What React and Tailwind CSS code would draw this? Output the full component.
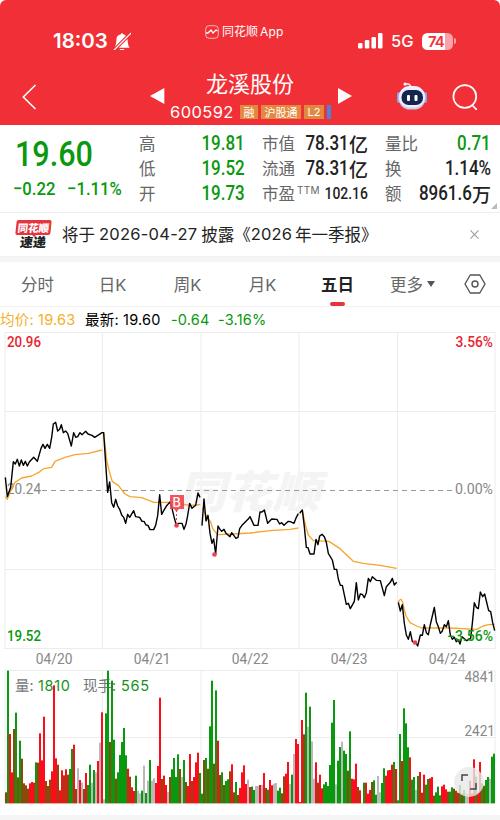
import { AiOutlineClose } from "react-icons/ai";
import { BsFillBellSlashFill } from "react-icons/bs";

const BAR_COLORS = { g: "#0a980f", r: "#fb0d1b", b: "#8b4a0c", x: "#b9b9b9" };

// colour key + top of the bar, one entry every 2px, 49 per day
const VOLUME = [
  "b457 g92 r282 r397 b267 g218 b412 g302 b356 b430 b436 b446 r430 r426 r428 g367 b368 r280 r361 r230 b423 b438 b419 r394 r136 r355 b374 r451 r391 b406 r388 b404 g387 g327 r314 b447 x385 r420 x428 b447 r399 g435 g374 x428 g390 x397 r363 x308 r217",
  "x478 g220 g92 b306 g122 g299 b416 g397 g345 g306 g264 g346 r386 b410 r442 r453 g407 x452 x460 g452 x377 g459 x422 g360 x422 x415 r429 r378 r173 b417 r407 r435 x456 b411 g388 g354 g411 g343 b387 x411 g360 b426 r438 r342 b423 r411 r367 r338 g399",
  "g461 b360 g354 b386 g259 g122 b371 g151 r302 b405 g397 b435 g423 g418 b394 r373 b457 g426 b465 r444 r397 r376 r432 x419 r441 g440 g450 x438 x438 r435 x435 r399 b444 g449 r420 r436 x431 x429 g452 g443 b460 b409 r401 r366 x432 g404 x342 r297 r312",
  "r486 r240 b283 g158 x260 g200 x304 x416 r367 b428 r404 r445 g433 g426 g438 g375 g248 g180 x433 g362 g321 x305 g332 g342 b392 g274 r416 r418 r371 b441 r451 x488 g428 r428 r461 r450 b426 g421 g464 x408 x457 g429 g385 r407 r391 r390 r374 g366 r387",
  "g481 g282 r363 g205 g250 g322 r352 g419 g411 x449 g408 r396 b458 r404 g434 g417 r415 r411 b467 g457 g440 g466 r439 r434 r448 b455 g455 g442 b446 b452 r458 g435 b461 g450 x458 x462 r422 r460 r358 g410 r458 r366 g430 b437 g420 g411 x416 g350 g341",
]
  .join(" ")
  .split(" ")
  .map((item) => ({ color: BAR_COLORS[item[0]], top: Number(item.slice(1)) }));

const PRICE = [
  "16,232 22,290 32,262 40,185 46,192 52,178 58,198 64,180 70,196 76,184 82,198 88,186 101,172 112,184 123,145 129,133 135,145 142,133 149,145 155,112 160,72 167,67 173,93 179,88 184,74 190,98 197,93 203,100 214,138 221,98 227,112 233,110 240,98 246,104 257,94 264,102 276,106 284,112 297,104 306,98 311,98 317,190 323,277 329,246 335,308 341,322 347,298 353,318 359,328 365,345 371,352 377,370 383,343 389,352 401,332 407,350 419,352 426,364 432,364 438,375 444,376 450,389 461,389 467,376 473,347 479,284 485,343 491,332 500,317 510,306 516,325 522,350 529,376 536,370 546,370 552,388 558,372 563,347 569,310 576,325 587,316 594,279 600,292",
  "606,377 612,297 618,363 624,346 630,400 636,430 641,417 647,462 654,378 660,388 665,394 672,388 678,400 690,410 695,398 708,415 714,412 719,386 726,376 738,364 744,358 750,350 762,376 774,376 780,336 786,336 793,330 803,370 815,357 831,358 839,372 845,368 852,376 865,364 871,365 882,370 889,352 895,341",
  "899,340 907,330 913,380 919,442 924,443 930,462 942,462 948,418 954,434 959,408 966,403 973,410 979,427 985,460 997,480 1003,508 1010,508 1015,537 1021,556 1027,556 1039,613 1045,610 1051,626 1063,604 1069,548 1075,600 1081,582 1087,583 1093,593 1099,578 1105,535 1111,545 1117,530 1129,541 1141,542 1153,587 1159,560 1171,547 1177,535 1183,555 1190,547",
  "1195,607 1201,633 1207,614 1213,670 1219,705 1225,718 1231,695 1237,725 1247,727 1253,738 1261,705 1267,706 1273,674 1279,698 1285,704 1291,674 1297,648 1303,622 1309,665 1315,680 1321,700 1327,693 1333,674 1339,680 1345,662 1351,705 1357,718 1363,712 1369,725 1375,720 1380,732 1386,710 1400,722 1412,715 1417,670 1423,608 1429,622 1435,626 1441,576 1448,590 1454,582 1466,632 1472,635 1478,668 1484,692",
];

const AVERAGE = [
  "16,290 22,298 35,265 45,247 65,234 95,228 115,218 131,206 155,202 165,184 195,172 225,164 265,160 306,150",
  "311,98 320,180 328,215 337,245 355,256 375,282 390,290 425,293 462,307 510,307 540,312 570,316 601,314",
  "608,325 620,350 632,366 638,385 645,395 655,404 700,402 750,399 810,392 870,388 895,384",
  "899,337 907,332 915,370 925,405 940,422 987,424 1020,446 1060,484 1090,490 1140,496 1190,505",
  "1195,607 1199,600 1203,598 1208,606 1213,630 1218,648 1230,668 1250,678 1265,684 1350,684 1430,688 1450,678 1465,674 1484,673",
];

const DAYS = ["04/20", "04/21", "04/22", "04/23", "04/24"];
const DAY_LINES = [5, 102.5, 201, 299, 397.5, 495];

const GREEN = "text-[#0a980f]";

const quotes = [
  [
    { label: "高", value: "19.81", color: GREEN },
    { label: "低", value: "19.52", color: GREEN },
    { label: "开", value: "19.73", color: GREEN },
  ],
  [
    { label: "市值", value: "78.31", unit: "亿" },
    { label: "流通", value: "78.31", unit: "亿" },
    { label: "市盈", sup: "TTM", value: "102.16", small: true },
  ],
  [
    { label: "量比", value: "0.71", color: GREEN },
    { label: "换", value: "1.14%" },
    { label: "额", value: "8961.6", unit: "万" },
  ],
];

function Robot() {
  return (
    <svg width="32" height="30" viewBox="0 0 32 30">
      <path d="M9 3.5q4-2 6 2" fill="none" stroke="#f3d9ea" strokeWidth="1.6" strokeLinecap="round" />
      <circle cx="9" cy="3" r="1.5" fill="#fff" />
      <rect x="1" y="11" width="5" height="11" rx="2.5" fill="#8fa3ec" />
      <rect x="26" y="11" width="5" height="11" rx="2.5" fill="#8fa3ec" />
      <rect x="2.5" y="5.5" width="27" height="23" rx="11.5" fill="#c9cdf8" />
      <rect x="3" y="5" width="26" height="21.5" rx="10.7" fill="#f1efff" />
      <rect x="5.5" y="9" width="21.5" height="15" rx="7" fill="#14264d" />
      <rect x="11" y="14" width="3" height="6" rx="1" fill="#fff" />
      <rect x="18.5" y="14" width="3" height="6" rx="1" fill="#fff" />
    </svg>
  );
}

function Header() {
  return (
    <header className="h-[125px] rounded-t-[6px] bg-[#f03036] text-white">
      <div className="flex h-[72px] items-start pl-[53px]">
        <span className="mt-[28px] w-[58px] font-[Inter] text-[20.5px] leading-[26px] font-semibold">
          18:03
        </span>
        <BsFillBellSlashFill className="mt-[32px] ml-[2px] h-[18px] w-[18px]" />
        <div className="mt-[22px] ml-[74px] flex w-[139px] items-center gap-[3px]">
          <svg width="14" height="14" viewBox="0 0 14 14" fill="none" stroke="#fff">
            <rect x=".7" y=".7" width="12.6" height="12.6" rx="3.5" strokeWidth=".8" opacity=".8" />
            <path d="M1 8h2l3-3 2 3 3-3 1.5 1" strokeWidth="1.3" />
          </svg>
          <span className="text-[12px] leading-[18px] whitespace-nowrap">
            同花顺<span className="ml-[2px] font-[Inter] tracking-[0.2px]">App</span>
          </span>
        </div>
        <div className="mt-[32px] ml-[14px] flex items-center">
          <svg width="25" height="16" viewBox="0 0 25 16" fill="#fff">
            <rect x="0" y="10" width="4.5" height="5.5" rx="1.2" />
            <rect x="6.8" y="7" width="4.5" height="8.5" rx="1.2" />
            <rect x="13.5" y="4" width="4.5" height="11.5" rx="1.2" />
            <rect x="20" y="0" width="4.5" height="15.5" rx="1.2" />
          </svg>
          <span className="ml-[8px] w-[23px] font-[Inter] text-[16.5px] leading-[18px] font-medium">
            5G
          </span>
          <div className="ml-[8px] flex h-[17px] w-[31px] items-center rounded-[5.5px] bg-linear-to-r from-white from-75% to-[#f9a3a8] to-75% pl-[6px] font-[Inter] text-[15px] leading-none font-semibold tracking-[-0.9px] text-[#f03036]">
            74
          </div>
          <span className="ml-[1px] h-[6px] w-[2px] rounded-r-full bg-[#f9a3a8]" />
        </div>
      </div>
      <div className="flex h-[53px] items-start">
        <svg className="mt-[12px] ml-[22px]" width="15" height="26" viewBox="0 0 15 26" fill="none" stroke="#fff" strokeWidth="1.6">
          <path d="M13.5 1 1.3 13l12.2 12" />
        </svg>
        <svg className="mt-[16px] ml-[113px]" width="15" height="16" viewBox="0 0 15 16" fill="#fff">
          <path d="M14.3 0v16L0 8z" />
        </svg>
        <div className="ml-[5px] w-[163px]">
          <div className="h-[22px] pl-[36px] text-[22px] leading-[20px] whitespace-nowrap">龙溪股份</div>
          <div className="mt-[10px] flex items-center gap-[3px]">
            <span className="w-[67px] font-[Inter] text-[16.5px] leading-[16px] tracking-[0.4px]">
              600592
            </span>
            <span className="h-[14px] w-[18px] bg-[#e3893f] text-center text-[11px] leading-[14px]">
              融
            </span>
            <span className="h-[14px] w-[40px] bg-[#e3893f] text-center text-[11px] leading-[14px]">
              沪股通
            </span>
            <span className="h-[14px] w-[20px] bg-[#e3893f] text-center font-[Inter] text-[11px] leading-[14px]">
              L2
            </span>
            <span className="h-[14px] w-[4px] bg-[#4b82db]" />
          </div>
        </div>
        <svg className="mt-[16px] ml-[5px]" width="15" height="16" viewBox="0 0 15 16" fill="#fff">
          <path d="M0 0v16l14-8z" />
        </svg>
        <div className="mt-[9px] ml-[43px]">
          <Robot />
        </div>
        <svg className="mt-[12px] ml-[24px]" width="27" height="26" viewBox="0 0 27 26" fill="none" stroke="#fff" strokeWidth="1.7">
          <circle cx="12.8" cy="12.5" r="11.4" />
          <path d="m20.5 21.5 3.8 3.8" strokeLinecap="round" />
        </svg>
      </div>
    </header>
  );
}

function QuoteRow({ item }) {
  return (
    <div className="flex h-[25px] items-center justify-between">
      <div className="flex items-start text-[16.5px] leading-[25px] text-[#666]">
        {item.label}
        {item.sup && (
          <span className="ml-[2px] font-[Inter] text-[10px] leading-[19px] tracking-[0.3px]">
            {item.sup}
          </span>
        )}
      </div>
      <div className={`flex items-center justify-end ${item.color ?? "text-[#222]"}`}>
        <span
          className={`w-0 font-[Roboto] leading-[25px] font-medium whitespace-nowrap ${
            item.small ? "text-[16px]" : "text-[19.5px]"
          }`}
        >
          <span className="float-right origin-right scale-x-[0.87]">{item.value}</span>
        </span>
        {item.unit && <span className="text-[19px] leading-[24px] font-medium">{item.unit}</span>}
      </div>
    </div>
  );
}

function Quotes() {
  return (
    <section className="relative flex h-[88px] border-b border-[#eee] pt-[6px]">
      <div className={`w-[139px] font-[Roboto] font-medium ${GREEN}`}>
        <div className="mt-[2px] ml-[15px] origin-left scale-x-[0.86] text-[35.5px] leading-[42px]">
          19.60
        </div>
        <div className="mt-[2px] ml-[13px] flex w-[140px] origin-left scale-x-[0.9] gap-[13px] text-[18.5px] leading-[24px] whitespace-nowrap">
          <span>−0.22</span>
          <span>−1.11%</span>
        </div>
      </div>
      <div className="flex gap-[17px]">
        {quotes.map((column, i) => (
          <div key={i} className="w-[106px]">
            {column.map((item) => (
              <QuoteRow key={item.label} item={item} />
            ))}
          </div>
        ))}
      </div>
      <svg className="absolute right-[3px] bottom-[3px]" width="6" height="6">
        <path d="M6 0v6H0z" fill="#bbb" />
      </svg>
    </section>
  );
}

function News() {
  return (
    <section className="flex h-[44px] items-center border-b border-[#f2f2f2]">
      <div className="ml-[15px] flex w-[37px] flex-col items-center">
        <span className="h-[15px] w-[35px] -skew-x-6 rounded-[2px] bg-[#e7353d] text-center text-[10.5px] leading-[15px] font-black text-white">
          同花顺
        </span>
        <span className="-mt-px border-x-[3px] border-t-[3px] border-x-transparent border-t-[#e7353d]" />
        <span className="-mt-[2px] -skew-x-6 text-[13px] leading-[14px] font-black text-[#222]">速递</span>
      </div>
      <div className="ml-[10px] flex w-[400px] items-center text-[16.5px] whitespace-nowrap text-[#222]">
        将于
        <span className="mx-[4px] font-[Inter] text-[16.5px] tracking-[0.25px]">2026-04-27</span>
        披露《
        <span className="mr-[3px] font-[Inter] text-[16.5px] tracking-[0.1px]">2026</span>
        年一季报》
      </div>
      <AiOutlineClose className="ml-[6px] h-[13px] w-[13px] text-[#999]" />
    </section>
  );
}

function Tabs() {
  return (
    <nav className="flex h-[45px] border-b border-[#f2f2f2] text-[16.5px] leading-[45px] text-[#666]">
      <span className="w-[75px] text-center">分时</span>
      <span className="w-[75px] text-center">
        日<span className="font-[Inter]">K</span>
      </span>
      <span className="w-[75px] text-center">
        周<span className="font-[Inter]">K</span>
      </span>
      <span className="w-[75px] text-center">
        月<span className="font-[Inter]">K</span>
      </span>
      <span className="flex w-[75px] flex-col items-center font-bold text-[#222]">
        <span className="h-[40px]">五日</span>
        <span className="h-[4px] w-[15px] shrink-0 rounded-full bg-[#e7353d]" />
      </span>
      <span className="flex w-[75px] items-center justify-center gap-[4px]">
        更多
        <svg width="8" height="6" viewBox="0 0 8 6" fill="#555">
          <path d="M0 0h8L4 6z" />
        </svg>
      </span>
      <span className="flex w-[50px] items-center justify-center">
        <svg width="22" height="20" viewBox="0 0 22 20" fill="none" stroke="#555" strokeWidth="1.4">
          <path d="M6.2 1h9.6L21 10l-5.2 9H6.2L1 10z" strokeLinejoin="round" />
          <circle cx="11" cy="10" r="3" />
        </svg>
      </span>
    </nav>
  );
}

function Legend() {
  return (
    <div className="flex h-[25px] items-center font-[Inter,'Noto_Sans_CJK_SC',sans-serif] text-[14.5px] tracking-[0.2px] whitespace-nowrap">
      <span className="w-[85px] text-[#f4b02a]">均价: 19.63</span>
      <span className="w-[86px] text-black">最新: 19.60</span>
      <span className={`w-[47px] ${GREEN}`}>-0.64</span>
      <span className={GREEN}>-3.16%</span>
    </div>
  );
}

function ChartText({ x, y, width, size = 14, fill, className = "font-[Roboto]", children }) {
  return (
    <text
      x={x}
      y={y}
      fill={fill}
      fontSize={size}
      textLength={width}
      lengthAdjust="spacingAndGlyphs"
      className={className}
    >
      {children}
    </text>
  );
}

function PriceChart() {
  return (
    <svg className="block" width="500" height="317" viewBox="0 332 500 317">
      <g stroke="#ececec">
        {DAY_LINES.map((x) => (
          <path key={x} d={`M${x} 332v317`} />
        ))}
        <path d="M5 332.5h490M5 411.5h490M5 569.5h490M5 648.5h490" />
      </g>
      <text
        x="178"
        y="508"
        fontSize="44"
        fill="#f4f4f4"
        textLength="142"
        lengthAdjust="spacingAndGlyphs"
        className="font-black italic"
      >
        同花顺
      </text>
      <path d="M42 490.5h414" stroke="#999" strokeDasharray="5 4" />
      <ChartText x="7" y="494" width="34" fill="#888">20.24</ChartText>
      <ChartText x="455" y="494" width="38" fill="#888">0.00%</ChartText>
      <g transform="translate(0 400) scale(.33333)" fill="none" strokeLinejoin="round">
        {AVERAGE.map((points) => (
          <polyline key={points} points={points} stroke="#f7a52c" strokeWidth="4" />
        ))}
        {PRICE.map((points) => (
          <polyline key={points} points={points} stroke="#000" strokeWidth="4.2" />
        ))}
      </g>
      <path d="M176.5 510v15" stroke="#ef4250" strokeDasharray="2 2" />
      <g fill="#ef4250">
        <path d="M170 495h14v14h-5l-2.5 3-2.5-3h-4z" opacity=".9" />
        <circle cx="176.5" cy="525.5" r="2.3" />
        <circle cx="214.5" cy="554.5" r="2.3" />
        <circle cx="415" cy="642.5" r="2.3" />
      </g>
      <text x="172.5" y="506.5" fontSize="12.5" fill="#fff" className="font-[Inter] font-medium">
        B
      </text>
      <ChartText x="7" y="346.5" width="34" fill="#e7242f" className="font-[Roboto] font-medium">
        20.96
      </ChartText>
      <ChartText x="455.5" y="346.5" width="37.5" fill="#e7242f" className="font-[Roboto] font-medium">
        3.56%
      </ChartText>
      <ChartText x="7" y="640.5" width="34" fill="#0a980f" className="font-[Roboto] font-medium">
        19.52
      </ChartText>
      <ChartText x="447" y="640.5" width="46" fill="#0a980f" className="font-[Roboto] font-medium">
        −3.56%
      </ChartText>
    </svg>
  );
}

function DateAxis() {
  return (
    <div className="flex h-[21px] pl-[5px] font-[Roboto] text-[14.5px] leading-[21px] text-[#888]">
      {DAYS.map((day) => (
        <span key={day} className="w-[98.2px] scale-x-[0.95] text-center">
          {day}
        </span>
      ))}
    </div>
  );
}

function VolumeChart() {
  return (
    <div className="relative h-[145px]">
      <svg className="block" width="500" height="134" viewBox="0 670 500 134">
        <g stroke="#ececec">
          {DAY_LINES.map((x) => (
            <path key={x} d={`M${x} 670v133`} />
          ))}
          <path d="M5 670.5h490M5 737.5h490" />
        </g>
        <text x="15" y="691" fontSize="14.5" fill="#777">量:</text>
        <text x="83" y="691" fontSize="14.5" fill="#777">现手:</text>
        {VOLUME.map((bar, i) => (
          <rect
            key={i}
            x={5 + i * 2}
            y={640 + bar.top / 3}
            width="2"
            height={163.4 - bar.top / 3}
            fill={bar.color}
          />
        ))}
        <g className="font-[Inter]" fontSize="14.5" fill="#16921b">
          <text x="38" y="691" textLength="32">1810</text>
          <text x="121" y="691" textLength="28">565</text>
        </g>
        <ChartText x="464.5" y="682" width="30.5" size={14.5} fill="#888">4841</ChartText>
        <ChartText x="464.5" y="736" width="30.5" size={14.5} fill="#888">2421</ChartText>
      </svg>
      <div className="absolute top-[97px] left-[454px] flex h-[30px] w-[30px] items-center justify-center rounded-full bg-[#e8e8e8]/80">
        <svg width="16" height="16" viewBox="0 0 16 16" fill="none" stroke="#444" strokeWidth="1.5">
          <path d="M1 7V1h6M15 9v6H9" />
        </svg>
      </div>
    </div>
  );
}

export default function App() {
  return (
    <div className="h-[820px] w-[500px] overflow-hidden bg-white font-['Noto_Sans_CJK_SC',sans-serif]">
      <Header />
      <Quotes />
      <News />
      <div className="h-[5px] bg-[#f5f5f5]" />
      <Tabs />
      <Legend />
      <PriceChart />
      <DateAxis />
      <VolumeChart />
      <div className="h-[6px] bg-[#f5f5f5]" />
    </div>
  );
}
